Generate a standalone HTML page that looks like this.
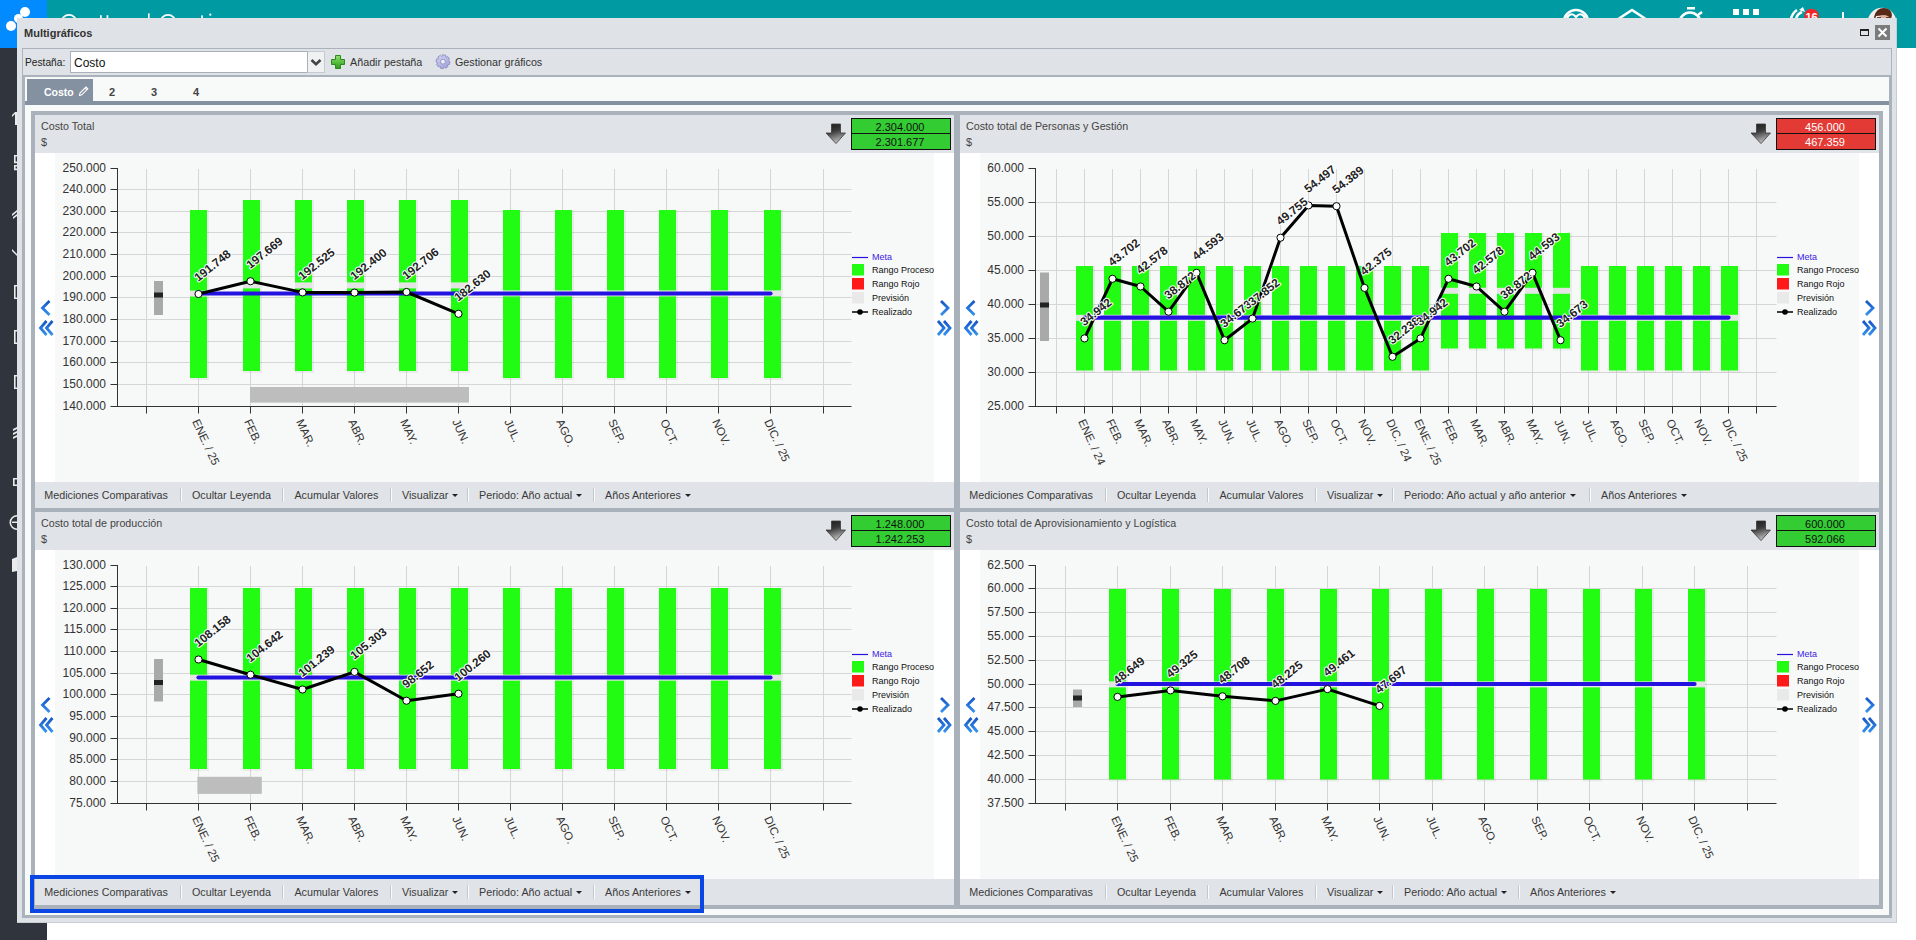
<!DOCTYPE html>
<html lang="es"><head><meta charset="utf-8"><title>Multigráficos</title>
<style>
*{margin:0;padding:0;box-sizing:border-box}
html,body{width:1916px;height:940px;overflow:hidden;background:#fff;font-family:"Liberation Sans", sans-serif;}
.a{position:absolute}
.t{position:absolute;white-space:nowrap;line-height:1}
svg text{font-family:"Liberation Sans", sans-serif}
</style></head><body>

<div class="a" style="left:0;top:0;width:1916px;height:48px;background:#009ba2"></div>
<div class="a" style="left:0;top:0;width:47px;height:48px;background:#028bff"></div>
<div class="a" style="left:0;top:48px;width:47px;height:892px;background:#30343c"></div>
<div class="a" style="left:6px;top:21px;width:10px;height:10px;border-radius:50%;background:#fff"></div>
<div class="a" style="left:14px;top:14px;width:9px;height:9px;border-radius:50%;background:#fff"></div>
<div class="a" style="left:20px;top:7px;width:10px;height:10px;border-radius:50%;background:#fff"></div>
<svg class="a" style="left:0;top:0" width="260" height="20"><g fill="none" stroke="#fff" stroke-width="1.7"><circle cx="69" cy="22.5" r="7.6"/><circle cx="168" cy="22.5" r="7.6"/></g><g fill="#fff"><rect x="100" y="15.2" width="1.7" height="4"/><rect x="106.6" y="15.2" width="1.7" height="4"/><rect x="148" y="13.4" width="1.6" height="6"/><rect x="201.2" y="15.4" width="1.7" height="4"/><circle cx="210.3" cy="14.7" r="1.15"/></g></svg>
<svg class="a" style="left:1540px;top:0" width="376" height="47" viewBox="0 0 376 47">
<circle cx="36" cy="22" r="12" fill="none" stroke="#ffffff" stroke-width="2.6"/>
<path d="M27 18 Q31 11 36 17 Q41 11 45 18" stroke="#ffffff" stroke-width="2.2" fill="none"/>
<path d="M77.5 19.5 L92 10 L106.5 19.5" stroke="#ffffff" stroke-width="2.6" fill="none" stroke-linejoin="miter"/>
<circle cx="150" cy="23" r="10.5" fill="none" stroke="#ffffff" stroke-width="2.6"/>
<rect x="147" y="7" width="8" height="2.5" fill="#ffffff"/>
<path d="M158 15 L162 12" stroke="#ffffff" stroke-width="2.6"/>
<rect x="193" y="9" width="6" height="6" fill="#ffffff"/><rect x="203" y="9" width="6" height="6" fill="#ffffff"/><rect x="213" y="9" width="6" height="6" fill="#ffffff"/>
<path d="M251 19 A14 14 0 0 1 257 10" stroke="#ffffff" stroke-width="2.6" fill="none"/>
<path d="M256 19 A10 10 0 0 1 262 12" stroke="#ffffff" stroke-width="2.6" fill="none"/>
<path d="M259 10 L263 7 L265 12Z" fill="#ffffff"/>
<circle cx="271.5" cy="16" r="7.3" fill="#f3262a"/>
<text x="271.5" y="21" font-size="11" font-weight="bold" fill="#fff" text-anchor="middle">16</text>
<rect x="302" y="12" width="2" height="8" fill="#ffffff"/>
<circle cx="342" cy="22" r="14.2" fill="#f2efed"/>
<path d="M334 17 Q336 8 344 8 Q351 8 352 15 L351 19 Q346 14 336 16 L335 20Z" fill="#5a2a18"/>
<ellipse cx="344" cy="21" rx="7" ry="6" fill="#e2b09a"/>
<path d="M337 17.5 h4 M346 17.5 h4" stroke="#6a3a2a" stroke-width="1.2"/>
</svg>
<svg class="a" style="left:0;top:112px" width="17" height="16"><path d="M15 0 h2 v13 h-2z M12 3 l3 -3 v2 l-3 3z" fill="#ffffff" opacity="0.9"/></svg>
<svg class="a" style="left:0;top:155px" width="17" height="16"><path d="M14 0 h3 v1.6 h-1.4 v5 h1.4 v1.6 h-3z M14 10 h3 v1.6 h-1.4 v2 h1.4 v1.6 h-3z" fill="#ffffff" opacity="0.9"/></svg>
<svg class="a" style="left:0;top:208px" width="17" height="16"><path d="M12 6 l5 -4 v2 l-5 4z M13 9 l4 -3 v2 l-4 3z" fill="#ffffff" opacity="0.9"/></svg>
<svg class="a" style="left:0;top:249px" width="17" height="16"><path d="M12 0 l5 5 v2 l-5 -5z" fill="#ffffff" opacity="0.9"/></svg>
<svg class="a" style="left:0;top:285px" width="17" height="16"><path d="M14 0 h3 v1.6 h-1.4 v10.8 h1.4 v1.6 h-3z" fill="#ffffff" opacity="0.9"/></svg>
<svg class="a" style="left:0;top:330px" width="17" height="16"><path d="M14 0 h3 v1.6 h-1.4 v10.8 h1.4 v1.6 h-3z" fill="#ffffff" opacity="0.9"/></svg>
<svg class="a" style="left:0;top:375px" width="17" height="16"><path d="M14 0 h3 v1.6 h-1.4 v10.8 h1.4 v1.6 h-3z" fill="#ffffff" opacity="0.9"/></svg>
<svg class="a" style="left:0;top:427px" width="17" height="16"><path d="M13 2 l4 -2 v2 l-4 2z M13 6 l4 -2 v2 l-4 2z M13 10 l4 -2 v2 l-4 2z" fill="#ffffff" opacity="0.9"/></svg>
<svg class="a" style="left:0;top:478px" width="17" height="16"><path d="M13 0 h4 v1.6 h-2.4 v4.8 h2.4 v1.6 h-4z" fill="#ffffff" opacity="0.9"/></svg>
<svg class="a" style="left:0;top:515px" width="17" height="16"><path d="M17 0 a7.5 7.5 0 0 0 0 15 v-1.6 a5.9 5.9 0 0 1 0 -11.8z M12 6.5 h5 v1.6 h-5z" fill="#ffffff" opacity="0.9"/></svg>
<svg class="a" style="left:0;top:557px" width="17" height="16"><path d="M12 2 l5 -2 v14 l-5 1z" fill="#ffffff" opacity="0.9"/></svg>
<div class="a" style="left:17px;top:18px;width:1880px;height:905px;background:#dfe2e6;border-right:1px solid #c8cdd3;border-bottom:1px solid #c8cdd3"></div>
<div class="t" style="left:24px;top:28px;font-size:11px;font-weight:bold;color:#333">Multigráficos</div>
<div class="a" style="left:1860px;top:29px;width:9px;height:7px;border:1.5px solid #222;border-top-width:2px"></div>
<div class="a" style="left:1875px;top:25px;width:15px;height:15px;background:#7b7b7b"></div>
<svg class="a" style="left:1875px;top:25px" width="15" height="15"><path d="M3.5 3.5 L11.5 11.5 M11.5 3.5 L3.5 11.5" stroke="#fff" stroke-width="2"/></svg>
<div class="a" style="left:22px;top:48px;width:1870px;height:870px;border:1px solid #aab2bb;border-left-width:1px;border-bottom-width:3px;border-top:1px solid #aab2bb;background:#f8f9f9"></div>
<div class="a" style="left:22px;top:75px;width:3px;height:843px;background:#aab2bb"></div>
<div class="a" style="left:1889px;top:77px;width:2px;height:838px;background:#aab2bb"></div>
<div class="a" style="left:23px;top:49px;width:1868px;height:28px;background:#dfe2e6;border-bottom:2px solid #aab2bb"></div>
<div class="t" style="left:25px;top:58px;font-size:10.2px;color:#222">Pestaña:</div>
<div class="a" style="left:70px;top:51px;width:238px;height:22px;background:#fff;border:1px solid #a9b0b8"></div>
<div class="t" style="left:74px;top:57px;font-size:12px;color:#111">Costo</div>
<div class="a" style="left:307px;top:51px;width:18px;height:22px;background:#f0f1f3;border:1px solid #c5cad0;border-left:1px solid #a9b0b8"></div>
<svg class="a" style="left:308px;top:55px" width="15" height="14"><path d="M3.5 5 L8 9.2 L12.5 5" stroke="#444" stroke-width="2.6" fill="none"/></svg>
<svg class="a" style="left:331px;top:55px" width="14" height="14" viewBox="0 0 14 14">
<defs><linearGradient id="gp" x1="0" y1="0" x2="0" y2="1"><stop offset="0" stop-color="#8be36a"/><stop offset="1" stop-color="#2c9a1a"/></linearGradient></defs>
<path d="M4.5 0.5 h5 v4 h4 v5 h-4 v4 h-5 v-4 h-4 v-5 h4z" fill="url(#gp)" stroke="#2a8a1c" stroke-width="1"/></svg>
<div class="t" style="left:350px;top:57px;font-size:10.75px;color:#333">Añadir pestaña</div>
<svg class="a" style="left:435px;top:54px" width="16" height="16" viewBox="0 0 16 16">
<defs><linearGradient id="gg" x1="0" y1="0" x2="1" y2="1"><stop offset="0" stop-color="#d8d8f4"/><stop offset="1" stop-color="#9a9ad6"/></linearGradient></defs>
<g transform="translate(8 7.7) rotate(11)"><path d="M5.05 -1.90 L6.83 -1.53 L6.83 1.53 L5.05 1.90 L4.92 2.23 L5.91 3.75 L3.75 5.91 L2.23 4.92 L1.90 5.05 L1.53 6.83 L-1.53 6.83 L-1.90 5.05 L-2.23 4.92 L-3.75 5.91 L-5.91 3.75 L-4.92 2.23 L-5.05 1.90 L-6.83 1.53 L-6.83 -1.53 L-5.05 -1.90 L-4.92 -2.23 L-5.91 -3.75 L-3.75 -5.91 L-2.23 -4.92 L-1.90 -5.05 L-1.53 -6.83 L1.53 -6.83 L1.90 -5.05 L2.23 -4.92 L3.75 -5.91 L5.91 -3.75 L4.92 -2.23Z" fill="url(#gg)" stroke="#8b8bc6" stroke-width="0.8" stroke-linejoin="round"/>
<circle r="2.4" fill="#eef0f8" stroke="#8b8bc6" stroke-width="0.8"/></g></svg>
<div class="t" style="left:455px;top:57px;font-size:10.75px;color:#333">Gestionar gráficos</div>
<div class="a" style="left:25px;top:77px;width:1864px;height:24px;background:#f8f9f9"></div>
<div class="a" style="left:25px;top:101px;width:1864px;height:4px;background:#8391a1"></div>
<div class="a" style="left:27px;top:79px;width:66px;height:23px;background:#8391a1"></div>
<div class="t" style="left:44px;top:87px;font-size:10.5px;font-weight:bold;color:#fff">Costo</div>
<svg class="a" style="left:78px;top:85px" width="11" height="12" viewBox="0 0 11 12"><path d="M1.5 10.5 L2 8 L8 2 L9.8 3.8 L3.8 9.8 Z M7 3 L8.8 4.8" stroke="#fff" stroke-width="1.1" fill="none"/></svg>
<div class="t" style="left:109px;top:87px;font-size:11px;font-weight:bold;color:#444">2</div>
<div class="t" style="left:151px;top:87px;font-size:11px;font-weight:bold;color:#444">3</div>
<div class="t" style="left:193px;top:87px;font-size:11px;font-weight:bold;color:#444">4</div>
<div class="a" style="left:31px;top:111px;width:1852px;height:798px;background:#a9b1ba"></div>
<div class="a" style="left:35px;top:115px;width:919px;height:38px;background:#e0e3e7"></div>
<div class="t" style="left:41px;top:121px;font-size:10.7px;color:#444">Costo Total</div>
<div class="t" style="left:41px;top:137px;font-size:10.9px;color:#444">$</div>
<svg class="a" style="left:825px;top:123px" width="22" height="22" viewBox="0 0 22 22">
<defs><linearGradient id="ar35115" x1="0" y1="0" x2="0.3" y2="1"><stop offset="0" stop-color="#1a1a1a"/><stop offset="0.45" stop-color="#3a3a3a"/><stop offset="1" stop-color="#b8b8b8"/></linearGradient></defs>
<path d="M6.5 1 h9 v9 h5 L11 20.6 L1 10 H6.5z" fill="url(#ar35115)" stroke="#3a3a3a" stroke-width="0.8" stroke-linejoin="round"/></svg>
<div class="a" style="left:851px;top:118px;width:100px;height:32px;background:#33cc33;border:1.5px solid #111"></div>
<div class="a" style="left:851px;top:132.6px;width:100px;height:1.3px;background:#111"></div>
<div class="t" style="left:851px;top:122px;width:98px;text-align:center;font-size:11px;color:#111">2.304.000</div>
<div class="t" style="left:851px;top:137px;width:98px;text-align:center;font-size:11px;color:#111">2.301.677</div>
<div class="a" style="left:35px;top:153px;width:919px;height:329px;background:#fff"></div>
<div class="a" style="left:55px;top:153px;width:879px;height:329px;background:#f7f8f8"></div>
<svg class="a" style="left:0;top:0" width="1916" height="940" viewBox="0 0 1916 940"><path d="M110.5 406.5 H117.5" stroke="#333333" stroke-width="1"/><text x="106.0" y="409.8" font-size="12" fill="#333" text-anchor="end">140.000</text><path d="M117.5 384.5 H851.5" stroke="#d6d6d6" stroke-width="1"/><path d="M110.5 384.5 H117.5" stroke="#333333" stroke-width="1"/><text x="106.0" y="387.8" font-size="12" fill="#333" text-anchor="end">150.000</text><path d="M117.5 362.5 H851.5" stroke="#d6d6d6" stroke-width="1"/><path d="M110.5 362.5 H117.5" stroke="#333333" stroke-width="1"/><text x="106.0" y="365.8" font-size="12" fill="#333" text-anchor="end">160.000</text><path d="M117.5 341.5 H851.5" stroke="#d6d6d6" stroke-width="1"/><path d="M110.5 341.5 H117.5" stroke="#333333" stroke-width="1"/><text x="106.0" y="344.8" font-size="12" fill="#333" text-anchor="end">170.000</text><path d="M117.5 319.5 H851.5" stroke="#d6d6d6" stroke-width="1"/><path d="M110.5 319.5 H117.5" stroke="#333333" stroke-width="1"/><text x="106.0" y="322.8" font-size="12" fill="#333" text-anchor="end">180.000</text><path d="M117.5 297.5 H851.5" stroke="#d6d6d6" stroke-width="1"/><path d="M110.5 297.5 H117.5" stroke="#333333" stroke-width="1"/><text x="106.0" y="300.8" font-size="12" fill="#333" text-anchor="end">190.000</text><path d="M117.5 276.5 H851.5" stroke="#d6d6d6" stroke-width="1"/><path d="M110.5 276.5 H117.5" stroke="#333333" stroke-width="1"/><text x="106.0" y="279.8" font-size="12" fill="#333" text-anchor="end">200.000</text><path d="M117.5 254.5 H851.5" stroke="#d6d6d6" stroke-width="1"/><path d="M110.5 254.5 H117.5" stroke="#333333" stroke-width="1"/><text x="106.0" y="257.8" font-size="12" fill="#333" text-anchor="end">210.000</text><path d="M117.5 232.5 H851.5" stroke="#d6d6d6" stroke-width="1"/><path d="M110.5 232.5 H117.5" stroke="#333333" stroke-width="1"/><text x="106.0" y="235.8" font-size="12" fill="#333" text-anchor="end">220.000</text><path d="M117.5 211.5 H851.5" stroke="#d6d6d6" stroke-width="1"/><path d="M110.5 211.5 H117.5" stroke="#333333" stroke-width="1"/><text x="106.0" y="214.8" font-size="12" fill="#333" text-anchor="end">230.000</text><path d="M117.5 189.5 H851.5" stroke="#d6d6d6" stroke-width="1"/><path d="M110.5 189.5 H117.5" stroke="#333333" stroke-width="1"/><text x="106.0" y="192.8" font-size="12" fill="#333" text-anchor="end">240.000</text><path d="M110.5 168.5 H117.5" stroke="#333333" stroke-width="1"/><text x="106.0" y="171.8" font-size="12" fill="#333" text-anchor="end">250.000</text><path d="M146.5 169 V406.5" stroke="#d6d6d6" stroke-width="1"/><path d="M146.5 406.5 V413.5" stroke="#333333" stroke-width="1"/><path d="M198.5 169 V406.5" stroke="#d6d6d6" stroke-width="1"/><path d="M198.5 406.5 V413.5" stroke="#333333" stroke-width="1"/><path d="M250.5 169 V406.5" stroke="#d6d6d6" stroke-width="1"/><path d="M250.5 406.5 V413.5" stroke="#333333" stroke-width="1"/><path d="M302.5 169 V406.5" stroke="#d6d6d6" stroke-width="1"/><path d="M302.5 406.5 V413.5" stroke="#333333" stroke-width="1"/><path d="M354.5 169 V406.5" stroke="#d6d6d6" stroke-width="1"/><path d="M354.5 406.5 V413.5" stroke="#333333" stroke-width="1"/><path d="M406.5 169 V406.5" stroke="#d6d6d6" stroke-width="1"/><path d="M406.5 406.5 V413.5" stroke="#333333" stroke-width="1"/><path d="M458.5 169 V406.5" stroke="#d6d6d6" stroke-width="1"/><path d="M458.5 406.5 V413.5" stroke="#333333" stroke-width="1"/><path d="M510.5 169 V406.5" stroke="#d6d6d6" stroke-width="1"/><path d="M510.5 406.5 V413.5" stroke="#333333" stroke-width="1"/><path d="M562.5 169 V406.5" stroke="#d6d6d6" stroke-width="1"/><path d="M562.5 406.5 V413.5" stroke="#333333" stroke-width="1"/><path d="M614.5 169 V406.5" stroke="#d6d6d6" stroke-width="1"/><path d="M614.5 406.5 V413.5" stroke="#333333" stroke-width="1"/><path d="M666.5 169 V406.5" stroke="#d6d6d6" stroke-width="1"/><path d="M666.5 406.5 V413.5" stroke="#333333" stroke-width="1"/><path d="M718.5 169 V406.5" stroke="#d6d6d6" stroke-width="1"/><path d="M718.5 406.5 V413.5" stroke="#333333" stroke-width="1"/><path d="M770.5 169 V406.5" stroke="#d6d6d6" stroke-width="1"/><path d="M770.5 406.5 V413.5" stroke="#333333" stroke-width="1"/><path d="M823.5 169 V406.5" stroke="#d6d6d6" stroke-width="1"/><path d="M823.5 406.5 V413.5" stroke="#333333" stroke-width="1"/><path d="M117.5 168 V406.5" stroke="#333333" stroke-width="1"/><path d="M117.0 406.5 H851.5" stroke="#333333" stroke-width="1"/><rect x="250" y="387" width="219" height="15.600000000000023" fill="#bdbdbd"/><rect x="154" y="281" width="9" height="34" fill="#a9a9a9"/><rect x="154" y="292.5" width="9" height="5" fill="#222"/><rect x="191" y="211.0" width="17" height="168.0" fill="none" stroke="#000" stroke-opacity="0.05" stroke-width="2"/><rect x="190" y="210.0" width="17" height="168.0" fill="#22fc12"/><rect x="244" y="201.0" width="17" height="171.0" fill="none" stroke="#000" stroke-opacity="0.05" stroke-width="2"/><rect x="243" y="200.0" width="17" height="171.0" fill="#22fc12"/><rect x="296" y="201.0" width="17" height="171.0" fill="none" stroke="#000" stroke-opacity="0.05" stroke-width="2"/><rect x="295" y="200.0" width="17" height="171.0" fill="#22fc12"/><rect x="348" y="201.0" width="17" height="171.0" fill="none" stroke="#000" stroke-opacity="0.05" stroke-width="2"/><rect x="347" y="200.0" width="17" height="171.0" fill="#22fc12"/><rect x="400" y="201.0" width="17" height="171.0" fill="none" stroke="#000" stroke-opacity="0.05" stroke-width="2"/><rect x="399" y="200.0" width="17" height="171.0" fill="#22fc12"/><rect x="452" y="201.0" width="17" height="171.0" fill="none" stroke="#000" stroke-opacity="0.05" stroke-width="2"/><rect x="451" y="200.0" width="17" height="171.0" fill="#22fc12"/><rect x="504" y="211.0" width="17" height="168.0" fill="none" stroke="#000" stroke-opacity="0.05" stroke-width="2"/><rect x="503" y="210.0" width="17" height="168.0" fill="#22fc12"/><rect x="556" y="211.0" width="17" height="168.0" fill="none" stroke="#000" stroke-opacity="0.05" stroke-width="2"/><rect x="555" y="210.0" width="17" height="168.0" fill="#22fc12"/><rect x="608" y="211.0" width="17" height="168.0" fill="none" stroke="#000" stroke-opacity="0.05" stroke-width="2"/><rect x="607" y="210.0" width="17" height="168.0" fill="#22fc12"/><rect x="660" y="211.0" width="17" height="168.0" fill="none" stroke="#000" stroke-opacity="0.05" stroke-width="2"/><rect x="659" y="210.0" width="17" height="168.0" fill="#22fc12"/><rect x="712" y="211.0" width="17" height="168.0" fill="none" stroke="#000" stroke-opacity="0.05" stroke-width="2"/><rect x="711" y="210.0" width="17" height="168.0" fill="#22fc12"/><rect x="765" y="211.0" width="17" height="168.0" fill="none" stroke="#000" stroke-opacity="0.05" stroke-width="2"/><rect x="764" y="210.0" width="17" height="168.0" fill="#22fc12"/><rect x="190" y="290.6" width="17" height="6" fill="#e4e4e4"/><rect x="243" y="282.4" width="17" height="6" fill="#e4e4e4"/><rect x="295" y="282.4" width="17" height="6" fill="#e4e4e4"/><rect x="347" y="282.4" width="17" height="6" fill="#e4e4e4"/><rect x="399" y="282.4" width="17" height="6" fill="#e4e4e4"/><rect x="451" y="282.4" width="17" height="6" fill="#e4e4e4"/><rect x="503" y="290.4" width="17" height="6" fill="#e4e4e4"/><rect x="555" y="290.4" width="17" height="6" fill="#e4e4e4"/><rect x="607" y="290.4" width="17" height="6" fill="#e4e4e4"/><rect x="659" y="290.4" width="17" height="6" fill="#e4e4e4"/><rect x="711" y="290.4" width="17" height="6" fill="#e4e4e4"/><rect x="764" y="290.4" width="17" height="6" fill="#e4e4e4"/><path d="M198.5 293.5 H770.5" stroke="#2412e0" stroke-width="4.2" stroke-linecap="round"/><path d="M198.5 294.0 L250.5 281.2 L302.5 292.4 L354.5 292.6 L406.5 292.0 L458.5 313.8" stroke="#000" stroke-width="3" fill="none" stroke-linejoin="round"/><circle cx="198.5" cy="294.0" r="3.6" fill="#fff" stroke="#000" stroke-width="1"/><circle cx="250.5" cy="281.2" r="3.6" fill="#fff" stroke="#000" stroke-width="1"/><circle cx="302.5" cy="292.4" r="3.6" fill="#fff" stroke="#000" stroke-width="1"/><circle cx="354.5" cy="292.6" r="3.6" fill="#fff" stroke="#000" stroke-width="1"/><circle cx="406.5" cy="292.0" r="3.6" fill="#fff" stroke="#000" stroke-width="1"/><circle cx="458.5" cy="313.8" r="3.6" fill="#fff" stroke="#000" stroke-width="1"/><text transform="translate(198.3 282.0) rotate(-38.5)" font-size="11.8" font-weight="bold" fill="#222" stroke="#fff" stroke-width="2" paint-order="stroke" stroke-linejoin="round">191.748</text><text transform="translate(250.3 269.2) rotate(-38.5)" font-size="11.8" font-weight="bold" fill="#222" stroke="#fff" stroke-width="2" paint-order="stroke" stroke-linejoin="round">197.669</text><text transform="translate(302.3 280.4) rotate(-38.5)" font-size="11.8" font-weight="bold" fill="#222" stroke="#fff" stroke-width="2" paint-order="stroke" stroke-linejoin="round">192.525</text><text transform="translate(354.3 280.6) rotate(-38.5)" font-size="11.8" font-weight="bold" fill="#222" stroke="#fff" stroke-width="2" paint-order="stroke" stroke-linejoin="round">192.400</text><text transform="translate(406.3 280.0) rotate(-38.5)" font-size="11.8" font-weight="bold" fill="#222" stroke="#fff" stroke-width="2" paint-order="stroke" stroke-linejoin="round">192.706</text><text transform="translate(458.3 301.8) rotate(-38.5)" font-size="11.8" font-weight="bold" fill="#222" stroke="#fff" stroke-width="2" paint-order="stroke" stroke-linejoin="round">182.630</text><text transform="translate(191.9 421.5) rotate(65)" font-size="11.5" fill="#333">ENE. / 25</text><text transform="translate(243.9 421.5) rotate(65)" font-size="11.5" fill="#333">FEB.</text><text transform="translate(295.9 421.5) rotate(65)" font-size="11.5" fill="#333">MAR.</text><text transform="translate(347.9 421.5) rotate(65)" font-size="11.5" fill="#333">ABR.</text><text transform="translate(399.9 421.5) rotate(65)" font-size="11.5" fill="#333">MAY.</text><text transform="translate(451.9 421.5) rotate(65)" font-size="11.5" fill="#333">JUN.</text><text transform="translate(503.9 421.5) rotate(65)" font-size="11.5" fill="#333">JUL.</text><text transform="translate(555.9 421.5) rotate(65)" font-size="11.5" fill="#333">AGO.</text><text transform="translate(607.9 421.5) rotate(65)" font-size="11.5" fill="#333">SEP.</text><text transform="translate(659.9 421.5) rotate(65)" font-size="11.5" fill="#333">OCT.</text><text transform="translate(711.9 421.5) rotate(65)" font-size="11.5" fill="#333">NOV.</text><text transform="translate(763.9 421.5) rotate(65)" font-size="11.5" fill="#333">DIC. / 25</text><path d="M852 257.5 H868" stroke="#2412e0" stroke-width="1.2"/><text x="872" y="260.0001" font-size="9" fill="#3b22e6">Meta</text><rect x="852" y="264.0001" width="12" height="11.5" fill="#22fc12"/><text x="872" y="272.5001" font-size="9" fill="#111">Rango Proceso</text><rect x="852" y="278.0001" width="12" height="11.5" fill="#ff1a1a"/><text x="872" y="286.5001" font-size="9" fill="#111">Rango Rojo</text><rect x="852" y="292.0001" width="12" height="11.5" fill="#e9e9e9"/><text x="872" y="300.5001" font-size="9" fill="#111">Previsión</text><path d="M852 312.0001 H868" stroke="#000" stroke-width="1.5"/><circle cx="860" cy="312.0001" r="2.8" fill="#000"/><text x="872" y="315.0001" font-size="9" fill="#111">Realizado</text><defs><linearGradient id="ag35153" x1="0" y1="0" x2="0" y2="1"><stop offset="0" stop-color="#1656c8"/><stop offset="1" stop-color="#3592ec"/></linearGradient></defs><g transform=""><path d="M49.5 301 L42.5 308 L49.5 315" stroke="url(#ag35153)" stroke-width="2.8" fill="none"/><path d="M46.5 321 L40.5 328 L46.5 335 M52.5 321 L46.5 328 L52.5 335" stroke="url(#ag35153)" stroke-width="2.8" fill="none"/></g><g transform="translate(951 0) scale(-1 1) translate(-938 0)"><path d="M948 301 L941 308 L948 315" stroke="url(#ag35153)" stroke-width="2.8" fill="none"/><path d="M945 321 L939 328 L945 335 M951 321 L945 328 L951 335" stroke="url(#ag35153)" stroke-width="2.8" fill="none"/></g></svg>
<div class="a" style="left:35px;top:482px;width:919px;height:26px;background:#e0e3e7"></div>
<div class="t" style="left:44.3px;top:490px;font-size:10.75px;color:#3a3a3a">Mediciones Comparativas</div>
<div class="t" style="left:192.0px;top:490px;font-size:10.75px;color:#3a3a3a">Ocultar Leyenda</div>
<div class="t" style="left:294.4px;top:490px;font-size:10.75px;color:#3a3a3a">Acumular Valores</div>
<div class="t" style="left:402.0px;top:490px;font-size:10.75px;color:#3a3a3a">Visualizar<span style="display:inline-block;width:0;height:0;border-left:3px solid transparent;border-right:3px solid transparent;border-top:3.5px solid #222;margin-left:4px;vertical-align:2px"></span></div>
<div class="t" style="left:479.0px;top:490px;font-size:10.75px;color:#3a3a3a">Periodo: Año actual<span style="display:inline-block;width:0;height:0;border-left:3px solid transparent;border-right:3px solid transparent;border-top:3.5px solid #222;margin-left:4px;vertical-align:2px"></span></div>
<div class="t" style="left:605.0px;top:490px;font-size:10.75px;color:#3a3a3a">Años Anteriores<span style="display:inline-block;width:0;height:0;border-left:3px solid transparent;border-right:3px solid transparent;border-top:3.5px solid #222;margin-left:4px;vertical-align:2px"></span></div>
<div class="a" style="left:179.9px;top:488px;width:1px;height:14px;background:#c3c8ce;box-shadow:1px 0 0 #fafbfb"></div>
<div class="a" style="left:282.0px;top:488px;width:1px;height:14px;background:#c3c8ce;box-shadow:1px 0 0 #fafbfb"></div>
<div class="a" style="left:390.0px;top:488px;width:1px;height:14px;background:#c3c8ce;box-shadow:1px 0 0 #fafbfb"></div>
<div class="a" style="left:467.0px;top:488px;width:1px;height:14px;background:#c3c8ce;box-shadow:1px 0 0 #fafbfb"></div>
<div class="a" style="left:592.8px;top:488px;width:1px;height:14px;background:#c3c8ce;box-shadow:1px 0 0 #fafbfb"></div>
<div class="a" style="left:960px;top:115px;width:919px;height:38px;background:#e0e3e7"></div>
<div class="t" style="left:966px;top:121px;font-size:10.7px;color:#444">Costo total de Personas y Gestión</div>
<div class="t" style="left:966px;top:137px;font-size:10.9px;color:#444">$</div>
<svg class="a" style="left:1750px;top:123px" width="22" height="22" viewBox="0 0 22 22">
<defs><linearGradient id="ar960115" x1="0" y1="0" x2="0.3" y2="1"><stop offset="0" stop-color="#1a1a1a"/><stop offset="0.45" stop-color="#3a3a3a"/><stop offset="1" stop-color="#b8b8b8"/></linearGradient></defs>
<path d="M6.5 1 h9 v9 h5 L11 20.6 L1 10 H6.5z" fill="url(#ar960115)" stroke="#3a3a3a" stroke-width="0.8" stroke-linejoin="round"/></svg>
<div class="a" style="left:1776px;top:118px;width:100px;height:32px;background:#e43a35;border:1.5px solid #111"></div>
<div class="a" style="left:1776px;top:132.6px;width:100px;height:1.3px;background:#111"></div>
<div class="t" style="left:1776px;top:122px;width:98px;text-align:center;font-size:11px;color:#fff">456.000</div>
<div class="t" style="left:1776px;top:137px;width:98px;text-align:center;font-size:11px;color:#fff">467.359</div>
<div class="a" style="left:960px;top:153px;width:919px;height:329px;background:#fff"></div>
<div class="a" style="left:980px;top:153px;width:879px;height:329px;background:#f7f8f8"></div>
<svg class="a" style="left:0;top:0" width="1916" height="940" viewBox="0 0 1916 940"><path d="M1028.5 406.5 H1035.5" stroke="#333333" stroke-width="1"/><text x="1024.0" y="409.8" font-size="12" fill="#333" text-anchor="end">25.000</text><path d="M1035.5 372.5 H1776.5" stroke="#d6d6d6" stroke-width="1"/><path d="M1028.5 372.5 H1035.5" stroke="#333333" stroke-width="1"/><text x="1024.0" y="375.8" font-size="12" fill="#333" text-anchor="end">30.000</text><path d="M1035.5 338.5 H1776.5" stroke="#d6d6d6" stroke-width="1"/><path d="M1028.5 338.5 H1035.5" stroke="#333333" stroke-width="1"/><text x="1024.0" y="341.8" font-size="12" fill="#333" text-anchor="end">35.000</text><path d="M1035.5 304.5 H1776.5" stroke="#d6d6d6" stroke-width="1"/><path d="M1028.5 304.5 H1035.5" stroke="#333333" stroke-width="1"/><text x="1024.0" y="307.8" font-size="12" fill="#333" text-anchor="end">40.000</text><path d="M1035.5 270.5 H1776.5" stroke="#d6d6d6" stroke-width="1"/><path d="M1028.5 270.5 H1035.5" stroke="#333333" stroke-width="1"/><text x="1024.0" y="273.8" font-size="12" fill="#333" text-anchor="end">45.000</text><path d="M1035.5 236.5 H1776.5" stroke="#d6d6d6" stroke-width="1"/><path d="M1028.5 236.5 H1035.5" stroke="#333333" stroke-width="1"/><text x="1024.0" y="239.8" font-size="12" fill="#333" text-anchor="end">50.000</text><path d="M1035.5 202.5 H1776.5" stroke="#d6d6d6" stroke-width="1"/><path d="M1028.5 202.5 H1035.5" stroke="#333333" stroke-width="1"/><text x="1024.0" y="205.8" font-size="12" fill="#333" text-anchor="end">55.000</text><path d="M1028.5 168.5 H1035.5" stroke="#333333" stroke-width="1"/><text x="1024.0" y="171.8" font-size="12" fill="#333" text-anchor="end">60.000</text><path d="M1056.5 169 V406.5" stroke="#d6d6d6" stroke-width="1"/><path d="M1056.5 406.5 V413.5" stroke="#333333" stroke-width="1"/><path d="M1084.5 169 V406.5" stroke="#d6d6d6" stroke-width="1"/><path d="M1084.5 406.5 V413.5" stroke="#333333" stroke-width="1"/><path d="M1112.5 169 V406.5" stroke="#d6d6d6" stroke-width="1"/><path d="M1112.5 406.5 V413.5" stroke="#333333" stroke-width="1"/><path d="M1140.5 169 V406.5" stroke="#d6d6d6" stroke-width="1"/><path d="M1140.5 406.5 V413.5" stroke="#333333" stroke-width="1"/><path d="M1168.5 169 V406.5" stroke="#d6d6d6" stroke-width="1"/><path d="M1168.5 406.5 V413.5" stroke="#333333" stroke-width="1"/><path d="M1196.5 169 V406.5" stroke="#d6d6d6" stroke-width="1"/><path d="M1196.5 406.5 V413.5" stroke="#333333" stroke-width="1"/><path d="M1224.5 169 V406.5" stroke="#d6d6d6" stroke-width="1"/><path d="M1224.5 406.5 V413.5" stroke="#333333" stroke-width="1"/><path d="M1252.5 169 V406.5" stroke="#d6d6d6" stroke-width="1"/><path d="M1252.5 406.5 V413.5" stroke="#333333" stroke-width="1"/><path d="M1280.5 169 V406.5" stroke="#d6d6d6" stroke-width="1"/><path d="M1280.5 406.5 V413.5" stroke="#333333" stroke-width="1"/><path d="M1308.5 169 V406.5" stroke="#d6d6d6" stroke-width="1"/><path d="M1308.5 406.5 V413.5" stroke="#333333" stroke-width="1"/><path d="M1336.5 169 V406.5" stroke="#d6d6d6" stroke-width="1"/><path d="M1336.5 406.5 V413.5" stroke="#333333" stroke-width="1"/><path d="M1364.5 169 V406.5" stroke="#d6d6d6" stroke-width="1"/><path d="M1364.5 406.5 V413.5" stroke="#333333" stroke-width="1"/><path d="M1392.5 169 V406.5" stroke="#d6d6d6" stroke-width="1"/><path d="M1392.5 406.5 V413.5" stroke="#333333" stroke-width="1"/><path d="M1420.5 169 V406.5" stroke="#d6d6d6" stroke-width="1"/><path d="M1420.5 406.5 V413.5" stroke="#333333" stroke-width="1"/><path d="M1448.5 169 V406.5" stroke="#d6d6d6" stroke-width="1"/><path d="M1448.5 406.5 V413.5" stroke="#333333" stroke-width="1"/><path d="M1476.5 169 V406.5" stroke="#d6d6d6" stroke-width="1"/><path d="M1476.5 406.5 V413.5" stroke="#333333" stroke-width="1"/><path d="M1504.5 169 V406.5" stroke="#d6d6d6" stroke-width="1"/><path d="M1504.5 406.5 V413.5" stroke="#333333" stroke-width="1"/><path d="M1532.5 169 V406.5" stroke="#d6d6d6" stroke-width="1"/><path d="M1532.5 406.5 V413.5" stroke="#333333" stroke-width="1"/><path d="M1560.5 169 V406.5" stroke="#d6d6d6" stroke-width="1"/><path d="M1560.5 406.5 V413.5" stroke="#333333" stroke-width="1"/><path d="M1588.5 169 V406.5" stroke="#d6d6d6" stroke-width="1"/><path d="M1588.5 406.5 V413.5" stroke="#333333" stroke-width="1"/><path d="M1616.5 169 V406.5" stroke="#d6d6d6" stroke-width="1"/><path d="M1616.5 406.5 V413.5" stroke="#333333" stroke-width="1"/><path d="M1644.5 169 V406.5" stroke="#d6d6d6" stroke-width="1"/><path d="M1644.5 406.5 V413.5" stroke="#333333" stroke-width="1"/><path d="M1672.5 169 V406.5" stroke="#d6d6d6" stroke-width="1"/><path d="M1672.5 406.5 V413.5" stroke="#333333" stroke-width="1"/><path d="M1700.5 169 V406.5" stroke="#d6d6d6" stroke-width="1"/><path d="M1700.5 406.5 V413.5" stroke="#333333" stroke-width="1"/><path d="M1728.5 169 V406.5" stroke="#d6d6d6" stroke-width="1"/><path d="M1728.5 406.5 V413.5" stroke="#333333" stroke-width="1"/><path d="M1756.5 169 V406.5" stroke="#d6d6d6" stroke-width="1"/><path d="M1756.5 406.5 V413.5" stroke="#333333" stroke-width="1"/><path d="M1035.5 168 V406.5" stroke="#333333" stroke-width="1"/><path d="M1035.0 406.5 H1776.5" stroke="#333333" stroke-width="1"/><rect x="1040" y="272.5" width="9" height="68.5" fill="#a9a9a9"/><rect x="1040" y="302.5" width="9" height="5" fill="#222"/><rect x="1077" y="267.0" width="17" height="104.5" fill="none" stroke="#000" stroke-opacity="0.05" stroke-width="2"/><rect x="1076" y="266.0" width="17" height="104.5" fill="#22fc12"/><rect x="1105" y="267.0" width="17" height="104.5" fill="none" stroke="#000" stroke-opacity="0.05" stroke-width="2"/><rect x="1104" y="266.0" width="17" height="104.5" fill="#22fc12"/><rect x="1133" y="267.0" width="17" height="104.5" fill="none" stroke="#000" stroke-opacity="0.05" stroke-width="2"/><rect x="1132" y="266.0" width="17" height="104.5" fill="#22fc12"/><rect x="1161" y="267.0" width="17" height="104.5" fill="none" stroke="#000" stroke-opacity="0.05" stroke-width="2"/><rect x="1160" y="266.0" width="17" height="104.5" fill="#22fc12"/><rect x="1189" y="267.0" width="17" height="104.5" fill="none" stroke="#000" stroke-opacity="0.05" stroke-width="2"/><rect x="1188" y="266.0" width="17" height="104.5" fill="#22fc12"/><rect x="1217" y="267.0" width="17" height="104.5" fill="none" stroke="#000" stroke-opacity="0.05" stroke-width="2"/><rect x="1216" y="266.0" width="17" height="104.5" fill="#22fc12"/><rect x="1245" y="267.0" width="17" height="104.5" fill="none" stroke="#000" stroke-opacity="0.05" stroke-width="2"/><rect x="1244" y="266.0" width="17" height="104.5" fill="#22fc12"/><rect x="1273" y="267.0" width="17" height="104.5" fill="none" stroke="#000" stroke-opacity="0.05" stroke-width="2"/><rect x="1272" y="266.0" width="17" height="104.5" fill="#22fc12"/><rect x="1301" y="267.0" width="17" height="104.5" fill="none" stroke="#000" stroke-opacity="0.05" stroke-width="2"/><rect x="1300" y="266.0" width="17" height="104.5" fill="#22fc12"/><rect x="1329" y="267.0" width="17" height="104.5" fill="none" stroke="#000" stroke-opacity="0.05" stroke-width="2"/><rect x="1328" y="266.0" width="17" height="104.5" fill="#22fc12"/><rect x="1357" y="267.0" width="17" height="104.5" fill="none" stroke="#000" stroke-opacity="0.05" stroke-width="2"/><rect x="1356" y="266.0" width="17" height="104.5" fill="#22fc12"/><rect x="1385" y="267.0" width="17" height="104.5" fill="none" stroke="#000" stroke-opacity="0.05" stroke-width="2"/><rect x="1384" y="266.0" width="17" height="104.5" fill="#22fc12"/><rect x="1413" y="267.0" width="17" height="104.5" fill="none" stroke="#000" stroke-opacity="0.05" stroke-width="2"/><rect x="1412" y="266.0" width="17" height="104.5" fill="#22fc12"/><rect x="1442" y="234.0" width="17" height="115.5" fill="none" stroke="#000" stroke-opacity="0.05" stroke-width="2"/><rect x="1441" y="233.0" width="17" height="115.5" fill="#22fc12"/><rect x="1470" y="234.0" width="17" height="115.5" fill="none" stroke="#000" stroke-opacity="0.05" stroke-width="2"/><rect x="1469" y="233.0" width="17" height="115.5" fill="#22fc12"/><rect x="1498" y="234.0" width="17" height="115.5" fill="none" stroke="#000" stroke-opacity="0.05" stroke-width="2"/><rect x="1497" y="233.0" width="17" height="115.5" fill="#22fc12"/><rect x="1526" y="234.0" width="17" height="115.5" fill="none" stroke="#000" stroke-opacity="0.05" stroke-width="2"/><rect x="1525" y="233.0" width="17" height="115.5" fill="#22fc12"/><rect x="1554" y="234.0" width="17" height="115.5" fill="none" stroke="#000" stroke-opacity="0.05" stroke-width="2"/><rect x="1553" y="233.0" width="17" height="115.5" fill="#22fc12"/><rect x="1582" y="267.0" width="17" height="104.5" fill="none" stroke="#000" stroke-opacity="0.05" stroke-width="2"/><rect x="1581" y="266.0" width="17" height="104.5" fill="#22fc12"/><rect x="1610" y="267.0" width="17" height="104.5" fill="none" stroke="#000" stroke-opacity="0.05" stroke-width="2"/><rect x="1609" y="266.0" width="17" height="104.5" fill="#22fc12"/><rect x="1638" y="267.0" width="17" height="104.5" fill="none" stroke="#000" stroke-opacity="0.05" stroke-width="2"/><rect x="1637" y="266.0" width="17" height="104.5" fill="#22fc12"/><rect x="1666" y="267.0" width="17" height="104.5" fill="none" stroke="#000" stroke-opacity="0.05" stroke-width="2"/><rect x="1665" y="266.0" width="17" height="104.5" fill="#22fc12"/><rect x="1694" y="267.0" width="17" height="104.5" fill="none" stroke="#000" stroke-opacity="0.05" stroke-width="2"/><rect x="1693" y="266.0" width="17" height="104.5" fill="#22fc12"/><rect x="1722" y="267.0" width="17" height="104.5" fill="none" stroke="#000" stroke-opacity="0.05" stroke-width="2"/><rect x="1721" y="266.0" width="17" height="104.5" fill="#22fc12"/><rect x="1076" y="314.8" width="17" height="6" fill="#e4e4e4"/><rect x="1104" y="314.8" width="17" height="6" fill="#e4e4e4"/><rect x="1132" y="314.8" width="17" height="6" fill="#e4e4e4"/><rect x="1160" y="314.8" width="17" height="6" fill="#e4e4e4"/><rect x="1188" y="314.8" width="17" height="6" fill="#e4e4e4"/><rect x="1216" y="314.8" width="17" height="6" fill="#e4e4e4"/><rect x="1244" y="314.8" width="17" height="6" fill="#e4e4e4"/><rect x="1272" y="314.8" width="17" height="6" fill="#e4e4e4"/><rect x="1300" y="314.8" width="17" height="6" fill="#e4e4e4"/><rect x="1328" y="314.8" width="17" height="6" fill="#e4e4e4"/><rect x="1356" y="314.8" width="17" height="6" fill="#e4e4e4"/><rect x="1384" y="314.8" width="17" height="6" fill="#e4e4e4"/><rect x="1412" y="314.8" width="17" height="6" fill="#e4e4e4"/><rect x="1441" y="287.8" width="17" height="6" fill="#e4e4e4"/><rect x="1469" y="287.8" width="17" height="6" fill="#e4e4e4"/><rect x="1497" y="287.8" width="17" height="6" fill="#e4e4e4"/><rect x="1525" y="287.8" width="17" height="6" fill="#e4e4e4"/><rect x="1553" y="287.8" width="17" height="6" fill="#e4e4e4"/><rect x="1581" y="314.8" width="17" height="6" fill="#e4e4e4"/><rect x="1609" y="314.8" width="17" height="6" fill="#e4e4e4"/><rect x="1637" y="314.8" width="17" height="6" fill="#e4e4e4"/><rect x="1665" y="314.8" width="17" height="6" fill="#e4e4e4"/><rect x="1693" y="314.8" width="17" height="6" fill="#e4e4e4"/><rect x="1721" y="314.8" width="17" height="6" fill="#e4e4e4"/><path d="M1084.5 317.6 H1728.5" stroke="#2412e0" stroke-width="4.2" stroke-linecap="round"/><path d="M1084.5 338.4 L1112.5 278.8 L1140.5 286.5 L1168.5 311.7 L1196.5 272.8 L1224.5 340.2 L1252.5 318.6 L1280.5 237.7 L1308.5 205.4 L1336.5 206.2 L1364.5 287.9 L1392.5 356.8 L1420.5 338.4 L1448.5 278.8 L1476.5 286.5 L1504.5 311.7 L1532.5 272.8 L1560.5 340.2" stroke="#000" stroke-width="3" fill="none" stroke-linejoin="round"/><circle cx="1084.5" cy="338.4" r="3.6" fill="#fff" stroke="#000" stroke-width="1"/><circle cx="1112.5" cy="278.8" r="3.6" fill="#fff" stroke="#000" stroke-width="1"/><circle cx="1140.5" cy="286.5" r="3.6" fill="#fff" stroke="#000" stroke-width="1"/><circle cx="1168.5" cy="311.7" r="3.6" fill="#fff" stroke="#000" stroke-width="1"/><circle cx="1196.5" cy="272.8" r="3.6" fill="#fff" stroke="#000" stroke-width="1"/><circle cx="1224.5" cy="340.2" r="3.6" fill="#fff" stroke="#000" stroke-width="1"/><circle cx="1252.5" cy="318.6" r="3.6" fill="#fff" stroke="#000" stroke-width="1"/><circle cx="1280.5" cy="237.7" r="3.6" fill="#fff" stroke="#000" stroke-width="1"/><circle cx="1308.5" cy="205.4" r="3.6" fill="#fff" stroke="#000" stroke-width="1"/><circle cx="1336.5" cy="206.2" r="3.6" fill="#fff" stroke="#000" stroke-width="1"/><circle cx="1364.5" cy="287.9" r="3.6" fill="#fff" stroke="#000" stroke-width="1"/><circle cx="1392.5" cy="356.8" r="3.6" fill="#fff" stroke="#000" stroke-width="1"/><circle cx="1420.5" cy="338.4" r="3.6" fill="#fff" stroke="#000" stroke-width="1"/><circle cx="1448.5" cy="278.8" r="3.6" fill="#fff" stroke="#000" stroke-width="1"/><circle cx="1476.5" cy="286.5" r="3.6" fill="#fff" stroke="#000" stroke-width="1"/><circle cx="1504.5" cy="311.7" r="3.6" fill="#fff" stroke="#000" stroke-width="1"/><circle cx="1532.5" cy="272.8" r="3.6" fill="#fff" stroke="#000" stroke-width="1"/><circle cx="1560.5" cy="340.2" r="3.6" fill="#fff" stroke="#000" stroke-width="1"/><text transform="translate(1084.3 326.4) rotate(-38.5)" font-size="11.8" font-weight="bold" fill="#222" stroke="#fff" stroke-width="2" paint-order="stroke" stroke-linejoin="round">34.942</text><text transform="translate(1112.3 266.8) rotate(-38.5)" font-size="11.8" font-weight="bold" fill="#222" stroke="#fff" stroke-width="2" paint-order="stroke" stroke-linejoin="round">43.702</text><text transform="translate(1140.3 274.5) rotate(-38.5)" font-size="11.8" font-weight="bold" fill="#222" stroke="#fff" stroke-width="2" paint-order="stroke" stroke-linejoin="round">42.578</text><text transform="translate(1168.3 299.7) rotate(-38.5)" font-size="11.8" font-weight="bold" fill="#222" stroke="#fff" stroke-width="2" paint-order="stroke" stroke-linejoin="round">38.872</text><text transform="translate(1196.3 260.8) rotate(-38.5)" font-size="11.8" font-weight="bold" fill="#222" stroke="#fff" stroke-width="2" paint-order="stroke" stroke-linejoin="round">44.593</text><text transform="translate(1224.3 328.2) rotate(-38.5)" font-size="11.8" font-weight="bold" fill="#222" stroke="#fff" stroke-width="2" paint-order="stroke" stroke-linejoin="round">34.673</text><text transform="translate(1252.3 306.6) rotate(-38.5)" font-size="11.8" font-weight="bold" fill="#222" stroke="#fff" stroke-width="2" paint-order="stroke" stroke-linejoin="round">37.852</text><text transform="translate(1280.3 225.7) rotate(-38.5)" font-size="11.8" font-weight="bold" fill="#222" stroke="#fff" stroke-width="2" paint-order="stroke" stroke-linejoin="round">49.755</text><text transform="translate(1308.3 193.4) rotate(-38.5)" font-size="11.8" font-weight="bold" fill="#222" stroke="#fff" stroke-width="2" paint-order="stroke" stroke-linejoin="round">54.497</text><text transform="translate(1336.3 194.2) rotate(-38.5)" font-size="11.8" font-weight="bold" fill="#222" stroke="#fff" stroke-width="2" paint-order="stroke" stroke-linejoin="round">54.389</text><text transform="translate(1364.3 275.9) rotate(-38.5)" font-size="11.8" font-weight="bold" fill="#222" stroke="#fff" stroke-width="2" paint-order="stroke" stroke-linejoin="round">42.375</text><text transform="translate(1392.3 344.8) rotate(-38.5)" font-size="11.8" font-weight="bold" fill="#222" stroke="#fff" stroke-width="2" paint-order="stroke" stroke-linejoin="round">32.238</text><text transform="translate(1420.3 326.4) rotate(-38.5)" font-size="11.8" font-weight="bold" fill="#222" stroke="#fff" stroke-width="2" paint-order="stroke" stroke-linejoin="round">34.942</text><text transform="translate(1448.3 266.8) rotate(-38.5)" font-size="11.8" font-weight="bold" fill="#222" stroke="#fff" stroke-width="2" paint-order="stroke" stroke-linejoin="round">43.702</text><text transform="translate(1476.3 274.5) rotate(-38.5)" font-size="11.8" font-weight="bold" fill="#222" stroke="#fff" stroke-width="2" paint-order="stroke" stroke-linejoin="round">42.578</text><text transform="translate(1504.3 299.7) rotate(-38.5)" font-size="11.8" font-weight="bold" fill="#222" stroke="#fff" stroke-width="2" paint-order="stroke" stroke-linejoin="round">38.872</text><text transform="translate(1532.3 260.8) rotate(-38.5)" font-size="11.8" font-weight="bold" fill="#222" stroke="#fff" stroke-width="2" paint-order="stroke" stroke-linejoin="round">44.593</text><text transform="translate(1560.3 328.2) rotate(-38.5)" font-size="11.8" font-weight="bold" fill="#222" stroke="#fff" stroke-width="2" paint-order="stroke" stroke-linejoin="round">34.673</text><text transform="translate(1077.9 421.5) rotate(65)" font-size="11.5" fill="#333">ENE. / 24</text><text transform="translate(1105.9 421.5) rotate(65)" font-size="11.5" fill="#333">FEB.</text><text transform="translate(1133.9 421.5) rotate(65)" font-size="11.5" fill="#333">MAR.</text><text transform="translate(1161.9 421.5) rotate(65)" font-size="11.5" fill="#333">ABR.</text><text transform="translate(1189.9 421.5) rotate(65)" font-size="11.5" fill="#333">MAY.</text><text transform="translate(1217.9 421.5) rotate(65)" font-size="11.5" fill="#333">JUN.</text><text transform="translate(1245.9 421.5) rotate(65)" font-size="11.5" fill="#333">JUL.</text><text transform="translate(1273.9 421.5) rotate(65)" font-size="11.5" fill="#333">AGO.</text><text transform="translate(1301.9 421.5) rotate(65)" font-size="11.5" fill="#333">SEP.</text><text transform="translate(1329.9 421.5) rotate(65)" font-size="11.5" fill="#333">OCT.</text><text transform="translate(1357.9 421.5) rotate(65)" font-size="11.5" fill="#333">NOV.</text><text transform="translate(1385.9 421.5) rotate(65)" font-size="11.5" fill="#333">DIC. / 24</text><text transform="translate(1413.9 421.5) rotate(65)" font-size="11.5" fill="#333">ENE. / 25</text><text transform="translate(1441.9 421.5) rotate(65)" font-size="11.5" fill="#333">FEB.</text><text transform="translate(1469.9 421.5) rotate(65)" font-size="11.5" fill="#333">MAR.</text><text transform="translate(1497.9 421.5) rotate(65)" font-size="11.5" fill="#333">ABR.</text><text transform="translate(1525.9 421.5) rotate(65)" font-size="11.5" fill="#333">MAY.</text><text transform="translate(1553.9 421.5) rotate(65)" font-size="11.5" fill="#333">JUN.</text><text transform="translate(1581.9 421.5) rotate(65)" font-size="11.5" fill="#333">JUL.</text><text transform="translate(1609.9 421.5) rotate(65)" font-size="11.5" fill="#333">AGO.</text><text transform="translate(1637.9 421.5) rotate(65)" font-size="11.5" fill="#333">SEP.</text><text transform="translate(1665.9 421.5) rotate(65)" font-size="11.5" fill="#333">OCT.</text><text transform="translate(1693.9 421.5) rotate(65)" font-size="11.5" fill="#333">NOV.</text><text transform="translate(1721.9 421.5) rotate(65)" font-size="11.5" fill="#333">DIC. / 25</text><path d="M1777 257.5 H1793" stroke="#2412e0" stroke-width="1.2"/><text x="1797" y="260.0001" font-size="9" fill="#3b22e6">Meta</text><rect x="1777" y="264.0001" width="12" height="11.5" fill="#22fc12"/><text x="1797" y="272.5001" font-size="9" fill="#111">Rango Proceso</text><rect x="1777" y="278.0001" width="12" height="11.5" fill="#ff1a1a"/><text x="1797" y="286.5001" font-size="9" fill="#111">Rango Rojo</text><rect x="1777" y="292.0001" width="12" height="11.5" fill="#e9e9e9"/><text x="1797" y="300.5001" font-size="9" fill="#111">Previsión</text><path d="M1777 312.0001 H1793" stroke="#000" stroke-width="1.5"/><circle cx="1785" cy="312.0001" r="2.8" fill="#000"/><text x="1797" y="315.0001" font-size="9" fill="#111">Realizado</text><defs><linearGradient id="ag960153" x1="0" y1="0" x2="0" y2="1"><stop offset="0" stop-color="#1656c8"/><stop offset="1" stop-color="#3592ec"/></linearGradient></defs><g transform=""><path d="M974.5 301 L967.5 308 L974.5 315" stroke="url(#ag960153)" stroke-width="2.8" fill="none"/><path d="M971.5 321 L965.5 328 L971.5 335 M977.5 321 L971.5 328 L977.5 335" stroke="url(#ag960153)" stroke-width="2.8" fill="none"/></g><g transform="translate(1876 0) scale(-1 1) translate(-1863 0)"><path d="M1873 301 L1866 308 L1873 315" stroke="url(#ag960153)" stroke-width="2.8" fill="none"/><path d="M1870 321 L1864 328 L1870 335 M1876 321 L1870 328 L1876 335" stroke="url(#ag960153)" stroke-width="2.8" fill="none"/></g></svg>
<div class="a" style="left:960px;top:482px;width:919px;height:26px;background:#e0e3e7"></div>
<div class="t" style="left:969.3px;top:490px;font-size:10.75px;color:#3a3a3a">Mediciones Comparativas</div>
<div class="t" style="left:1117.0px;top:490px;font-size:10.75px;color:#3a3a3a">Ocultar Leyenda</div>
<div class="t" style="left:1219.4px;top:490px;font-size:10.75px;color:#3a3a3a">Acumular Valores</div>
<div class="t" style="left:1327.0px;top:490px;font-size:10.75px;color:#3a3a3a">Visualizar<span style="display:inline-block;width:0;height:0;border-left:3px solid transparent;border-right:3px solid transparent;border-top:3.5px solid #222;margin-left:4px;vertical-align:2px"></span></div>
<div class="t" style="left:1404.0px;top:490px;font-size:10.75px;color:#3a3a3a">Periodo: Año actual y año anterior<span style="display:inline-block;width:0;height:0;border-left:3px solid transparent;border-right:3px solid transparent;border-top:3.5px solid #222;margin-left:4px;vertical-align:2px"></span></div>
<div class="t" style="left:1601.0px;top:490px;font-size:10.75px;color:#3a3a3a">Años Anteriores<span style="display:inline-block;width:0;height:0;border-left:3px solid transparent;border-right:3px solid transparent;border-top:3.5px solid #222;margin-left:4px;vertical-align:2px"></span></div>
<div class="a" style="left:1104.9px;top:488px;width:1px;height:14px;background:#c3c8ce;box-shadow:1px 0 0 #fafbfb"></div>
<div class="a" style="left:1207.0px;top:488px;width:1px;height:14px;background:#c3c8ce;box-shadow:1px 0 0 #fafbfb"></div>
<div class="a" style="left:1315.0px;top:488px;width:1px;height:14px;background:#c3c8ce;box-shadow:1px 0 0 #fafbfb"></div>
<div class="a" style="left:1392.0px;top:488px;width:1px;height:14px;background:#c3c8ce;box-shadow:1px 0 0 #fafbfb"></div>
<div class="a" style="left:1589.0px;top:488px;width:1px;height:14px;background:#c3c8ce;box-shadow:1px 0 0 #fafbfb"></div>
<div class="a" style="left:35px;top:512px;width:919px;height:38px;background:#e0e3e7"></div>
<div class="t" style="left:41px;top:518px;font-size:10.7px;color:#444">Costo total de producción</div>
<div class="t" style="left:41px;top:534px;font-size:10.9px;color:#444">$</div>
<svg class="a" style="left:825px;top:520px" width="22" height="22" viewBox="0 0 22 22">
<defs><linearGradient id="ar35512" x1="0" y1="0" x2="0.3" y2="1"><stop offset="0" stop-color="#1a1a1a"/><stop offset="0.45" stop-color="#3a3a3a"/><stop offset="1" stop-color="#b8b8b8"/></linearGradient></defs>
<path d="M6.5 1 h9 v9 h5 L11 20.6 L1 10 H6.5z" fill="url(#ar35512)" stroke="#3a3a3a" stroke-width="0.8" stroke-linejoin="round"/></svg>
<div class="a" style="left:851px;top:515px;width:100px;height:32px;background:#33cc33;border:1.5px solid #111"></div>
<div class="a" style="left:851px;top:529.6px;width:100px;height:1.3px;background:#111"></div>
<div class="t" style="left:851px;top:519px;width:98px;text-align:center;font-size:11px;color:#111">1.248.000</div>
<div class="t" style="left:851px;top:534px;width:98px;text-align:center;font-size:11px;color:#111">1.242.253</div>
<div class="a" style="left:35px;top:550px;width:919px;height:329px;background:#fff"></div>
<div class="a" style="left:55px;top:550px;width:879px;height:329px;background:#f7f8f8"></div>
<svg class="a" style="left:0;top:0" width="1916" height="940" viewBox="0 0 1916 940"><path d="M110.5 803.5 H117.5" stroke="#333333" stroke-width="1"/><text x="106.0" y="806.8" font-size="12" fill="#333" text-anchor="end">75.000</text><path d="M117.5 781.5 H851.5" stroke="#d6d6d6" stroke-width="1"/><path d="M110.5 781.5 H117.5" stroke="#333333" stroke-width="1"/><text x="106.0" y="784.8" font-size="12" fill="#333" text-anchor="end">80.000</text><path d="M117.5 759.5 H851.5" stroke="#d6d6d6" stroke-width="1"/><path d="M110.5 759.5 H117.5" stroke="#333333" stroke-width="1"/><text x="106.0" y="762.8" font-size="12" fill="#333" text-anchor="end">85.000</text><path d="M117.5 738.5 H851.5" stroke="#d6d6d6" stroke-width="1"/><path d="M110.5 738.5 H117.5" stroke="#333333" stroke-width="1"/><text x="106.0" y="741.8" font-size="12" fill="#333" text-anchor="end">90.000</text><path d="M117.5 716.5 H851.5" stroke="#d6d6d6" stroke-width="1"/><path d="M110.5 716.5 H117.5" stroke="#333333" stroke-width="1"/><text x="106.0" y="719.8" font-size="12" fill="#333" text-anchor="end">95.000</text><path d="M117.5 694.5 H851.5" stroke="#d6d6d6" stroke-width="1"/><path d="M110.5 694.5 H117.5" stroke="#333333" stroke-width="1"/><text x="106.0" y="697.8" font-size="12" fill="#333" text-anchor="end">100.000</text><path d="M117.5 673.5 H851.5" stroke="#d6d6d6" stroke-width="1"/><path d="M110.5 673.5 H117.5" stroke="#333333" stroke-width="1"/><text x="106.0" y="676.8" font-size="12" fill="#333" text-anchor="end">105.000</text><path d="M117.5 651.5 H851.5" stroke="#d6d6d6" stroke-width="1"/><path d="M110.5 651.5 H117.5" stroke="#333333" stroke-width="1"/><text x="106.0" y="654.8" font-size="12" fill="#333" text-anchor="end">110.000</text><path d="M117.5 629.5 H851.5" stroke="#d6d6d6" stroke-width="1"/><path d="M110.5 629.5 H117.5" stroke="#333333" stroke-width="1"/><text x="106.0" y="632.8" font-size="12" fill="#333" text-anchor="end">115.000</text><path d="M117.5 608.5 H851.5" stroke="#d6d6d6" stroke-width="1"/><path d="M110.5 608.5 H117.5" stroke="#333333" stroke-width="1"/><text x="106.0" y="611.8" font-size="12" fill="#333" text-anchor="end">120.000</text><path d="M117.5 586.5 H851.5" stroke="#d6d6d6" stroke-width="1"/><path d="M110.5 586.5 H117.5" stroke="#333333" stroke-width="1"/><text x="106.0" y="589.8" font-size="12" fill="#333" text-anchor="end">125.000</text><path d="M110.5 565.5 H117.5" stroke="#333333" stroke-width="1"/><text x="106.0" y="568.8" font-size="12" fill="#333" text-anchor="end">130.000</text><path d="M146.5 566 V803.5" stroke="#d6d6d6" stroke-width="1"/><path d="M146.5 803.5 V810.5" stroke="#333333" stroke-width="1"/><path d="M198.5 566 V803.5" stroke="#d6d6d6" stroke-width="1"/><path d="M198.5 803.5 V810.5" stroke="#333333" stroke-width="1"/><path d="M250.5 566 V803.5" stroke="#d6d6d6" stroke-width="1"/><path d="M250.5 803.5 V810.5" stroke="#333333" stroke-width="1"/><path d="M302.5 566 V803.5" stroke="#d6d6d6" stroke-width="1"/><path d="M302.5 803.5 V810.5" stroke="#333333" stroke-width="1"/><path d="M354.5 566 V803.5" stroke="#d6d6d6" stroke-width="1"/><path d="M354.5 803.5 V810.5" stroke="#333333" stroke-width="1"/><path d="M406.5 566 V803.5" stroke="#d6d6d6" stroke-width="1"/><path d="M406.5 803.5 V810.5" stroke="#333333" stroke-width="1"/><path d="M458.5 566 V803.5" stroke="#d6d6d6" stroke-width="1"/><path d="M458.5 803.5 V810.5" stroke="#333333" stroke-width="1"/><path d="M510.5 566 V803.5" stroke="#d6d6d6" stroke-width="1"/><path d="M510.5 803.5 V810.5" stroke="#333333" stroke-width="1"/><path d="M562.5 566 V803.5" stroke="#d6d6d6" stroke-width="1"/><path d="M562.5 803.5 V810.5" stroke="#333333" stroke-width="1"/><path d="M614.5 566 V803.5" stroke="#d6d6d6" stroke-width="1"/><path d="M614.5 803.5 V810.5" stroke="#333333" stroke-width="1"/><path d="M666.5 566 V803.5" stroke="#d6d6d6" stroke-width="1"/><path d="M666.5 803.5 V810.5" stroke="#333333" stroke-width="1"/><path d="M718.5 566 V803.5" stroke="#d6d6d6" stroke-width="1"/><path d="M718.5 803.5 V810.5" stroke="#333333" stroke-width="1"/><path d="M770.5 566 V803.5" stroke="#d6d6d6" stroke-width="1"/><path d="M770.5 803.5 V810.5" stroke="#333333" stroke-width="1"/><path d="M823.5 566 V803.5" stroke="#d6d6d6" stroke-width="1"/><path d="M823.5 803.5 V810.5" stroke="#333333" stroke-width="1"/><path d="M117.5 565 V803.5" stroke="#333333" stroke-width="1"/><path d="M117.0 803.5 H851.5" stroke="#333333" stroke-width="1"/><rect x="197.4" y="776.8" width="64.4" height="17.100000000000023" fill="#bdbdbd"/><rect x="154" y="659" width="9" height="42.5" fill="#a9a9a9"/><rect x="154" y="680.0" width="9" height="5" fill="#222"/><rect x="191" y="589.0" width="17" height="181.0" fill="none" stroke="#000" stroke-opacity="0.05" stroke-width="2"/><rect x="190" y="588.0" width="17" height="181.0" fill="#22fc12"/><rect x="244" y="589.0" width="17" height="181.0" fill="none" stroke="#000" stroke-opacity="0.05" stroke-width="2"/><rect x="243" y="588.0" width="17" height="181.0" fill="#22fc12"/><rect x="296" y="589.0" width="17" height="181.0" fill="none" stroke="#000" stroke-opacity="0.05" stroke-width="2"/><rect x="295" y="588.0" width="17" height="181.0" fill="#22fc12"/><rect x="348" y="589.0" width="17" height="181.0" fill="none" stroke="#000" stroke-opacity="0.05" stroke-width="2"/><rect x="347" y="588.0" width="17" height="181.0" fill="#22fc12"/><rect x="400" y="589.0" width="17" height="181.0" fill="none" stroke="#000" stroke-opacity="0.05" stroke-width="2"/><rect x="399" y="588.0" width="17" height="181.0" fill="#22fc12"/><rect x="452" y="589.0" width="17" height="181.0" fill="none" stroke="#000" stroke-opacity="0.05" stroke-width="2"/><rect x="451" y="588.0" width="17" height="181.0" fill="#22fc12"/><rect x="504" y="589.0" width="17" height="181.0" fill="none" stroke="#000" stroke-opacity="0.05" stroke-width="2"/><rect x="503" y="588.0" width="17" height="181.0" fill="#22fc12"/><rect x="556" y="589.0" width="17" height="181.0" fill="none" stroke="#000" stroke-opacity="0.05" stroke-width="2"/><rect x="555" y="588.0" width="17" height="181.0" fill="#22fc12"/><rect x="608" y="589.0" width="17" height="181.0" fill="none" stroke="#000" stroke-opacity="0.05" stroke-width="2"/><rect x="607" y="588.0" width="17" height="181.0" fill="#22fc12"/><rect x="660" y="589.0" width="17" height="181.0" fill="none" stroke="#000" stroke-opacity="0.05" stroke-width="2"/><rect x="659" y="588.0" width="17" height="181.0" fill="#22fc12"/><rect x="712" y="589.0" width="17" height="181.0" fill="none" stroke="#000" stroke-opacity="0.05" stroke-width="2"/><rect x="711" y="588.0" width="17" height="181.0" fill="#22fc12"/><rect x="765" y="589.0" width="17" height="181.0" fill="none" stroke="#000" stroke-opacity="0.05" stroke-width="2"/><rect x="764" y="588.0" width="17" height="181.0" fill="#22fc12"/><rect x="190" y="674.7" width="17" height="6" fill="#e4e4e4"/><rect x="243" y="674.7" width="17" height="6" fill="#e4e4e4"/><rect x="295" y="674.7" width="17" height="6" fill="#e4e4e4"/><rect x="347" y="674.7" width="17" height="6" fill="#e4e4e4"/><rect x="399" y="674.7" width="17" height="6" fill="#e4e4e4"/><rect x="451" y="674.7" width="17" height="6" fill="#e4e4e4"/><rect x="503" y="674.7" width="17" height="6" fill="#e4e4e4"/><rect x="555" y="674.7" width="17" height="6" fill="#e4e4e4"/><rect x="607" y="674.7" width="17" height="6" fill="#e4e4e4"/><rect x="659" y="674.7" width="17" height="6" fill="#e4e4e4"/><rect x="711" y="674.7" width="17" height="6" fill="#e4e4e4"/><rect x="764" y="674.7" width="17" height="6" fill="#e4e4e4"/><path d="M198.5 677.5 H770.5" stroke="#2412e0" stroke-width="4.2" stroke-linecap="round"/><path d="M198.5 659.5 L250.5 674.7 L302.5 689.5 L354.5 671.9 L406.5 700.7 L458.5 693.7" stroke="#000" stroke-width="3" fill="none" stroke-linejoin="round"/><circle cx="198.5" cy="659.5" r="3.6" fill="#fff" stroke="#000" stroke-width="1"/><circle cx="250.5" cy="674.7" r="3.6" fill="#fff" stroke="#000" stroke-width="1"/><circle cx="302.5" cy="689.5" r="3.6" fill="#fff" stroke="#000" stroke-width="1"/><circle cx="354.5" cy="671.9" r="3.6" fill="#fff" stroke="#000" stroke-width="1"/><circle cx="406.5" cy="700.7" r="3.6" fill="#fff" stroke="#000" stroke-width="1"/><circle cx="458.5" cy="693.7" r="3.6" fill="#fff" stroke="#000" stroke-width="1"/><text transform="translate(198.3 647.5) rotate(-38.5)" font-size="11.8" font-weight="bold" fill="#222" stroke="#fff" stroke-width="2" paint-order="stroke" stroke-linejoin="round">108.158</text><text transform="translate(250.3 662.7) rotate(-38.5)" font-size="11.8" font-weight="bold" fill="#222" stroke="#fff" stroke-width="2" paint-order="stroke" stroke-linejoin="round">104.642</text><text transform="translate(302.3 677.5) rotate(-38.5)" font-size="11.8" font-weight="bold" fill="#222" stroke="#fff" stroke-width="2" paint-order="stroke" stroke-linejoin="round">101.239</text><text transform="translate(354.3 659.9) rotate(-38.5)" font-size="11.8" font-weight="bold" fill="#222" stroke="#fff" stroke-width="2" paint-order="stroke" stroke-linejoin="round">105.303</text><text transform="translate(406.3 688.7) rotate(-38.5)" font-size="11.8" font-weight="bold" fill="#222" stroke="#fff" stroke-width="2" paint-order="stroke" stroke-linejoin="round">98.652</text><text transform="translate(458.3 681.7) rotate(-38.5)" font-size="11.8" font-weight="bold" fill="#222" stroke="#fff" stroke-width="2" paint-order="stroke" stroke-linejoin="round">100.260</text><text transform="translate(191.9 818.5) rotate(65)" font-size="11.5" fill="#333">ENE. / 25</text><text transform="translate(243.9 818.5) rotate(65)" font-size="11.5" fill="#333">FEB.</text><text transform="translate(295.9 818.5) rotate(65)" font-size="11.5" fill="#333">MAR.</text><text transform="translate(347.9 818.5) rotate(65)" font-size="11.5" fill="#333">ABR.</text><text transform="translate(399.9 818.5) rotate(65)" font-size="11.5" fill="#333">MAY.</text><text transform="translate(451.9 818.5) rotate(65)" font-size="11.5" fill="#333">JUN.</text><text transform="translate(503.9 818.5) rotate(65)" font-size="11.5" fill="#333">JUL.</text><text transform="translate(555.9 818.5) rotate(65)" font-size="11.5" fill="#333">AGO.</text><text transform="translate(607.9 818.5) rotate(65)" font-size="11.5" fill="#333">SEP.</text><text transform="translate(659.9 818.5) rotate(65)" font-size="11.5" fill="#333">OCT.</text><text transform="translate(711.9 818.5) rotate(65)" font-size="11.5" fill="#333">NOV.</text><text transform="translate(763.9 818.5) rotate(65)" font-size="11.5" fill="#333">DIC. / 25</text><path d="M852 654.5 H868" stroke="#2412e0" stroke-width="1.2"/><text x="872" y="657.0001" font-size="9" fill="#3b22e6">Meta</text><rect x="852" y="661.0001" width="12" height="11.5" fill="#22fc12"/><text x="872" y="669.5001" font-size="9" fill="#111">Rango Proceso</text><rect x="852" y="675.0001" width="12" height="11.5" fill="#ff1a1a"/><text x="872" y="683.5001" font-size="9" fill="#111">Rango Rojo</text><rect x="852" y="689.0001" width="12" height="11.5" fill="#e9e9e9"/><text x="872" y="697.5001" font-size="9" fill="#111">Previsión</text><path d="M852 709.0001 H868" stroke="#000" stroke-width="1.5"/><circle cx="860" cy="709.0001" r="2.8" fill="#000"/><text x="872" y="712.0001" font-size="9" fill="#111">Realizado</text><defs><linearGradient id="ag35550" x1="0" y1="0" x2="0" y2="1"><stop offset="0" stop-color="#1656c8"/><stop offset="1" stop-color="#3592ec"/></linearGradient></defs><g transform=""><path d="M49.5 698 L42.5 705 L49.5 712" stroke="url(#ag35550)" stroke-width="2.8" fill="none"/><path d="M46.5 718 L40.5 725 L46.5 732 M52.5 718 L46.5 725 L52.5 732" stroke="url(#ag35550)" stroke-width="2.8" fill="none"/></g><g transform="translate(951 0) scale(-1 1) translate(-938 0)"><path d="M948 698 L941 705 L948 712" stroke="url(#ag35550)" stroke-width="2.8" fill="none"/><path d="M945 718 L939 725 L945 732 M951 718 L945 725 L951 732" stroke="url(#ag35550)" stroke-width="2.8" fill="none"/></g></svg>
<div class="a" style="left:35px;top:879px;width:919px;height:26px;background:#e0e3e7"></div>
<div class="t" style="left:44.3px;top:887px;font-size:10.75px;color:#3a3a3a">Mediciones Comparativas</div>
<div class="t" style="left:192.0px;top:887px;font-size:10.75px;color:#3a3a3a">Ocultar Leyenda</div>
<div class="t" style="left:294.4px;top:887px;font-size:10.75px;color:#3a3a3a">Acumular Valores</div>
<div class="t" style="left:402.0px;top:887px;font-size:10.75px;color:#3a3a3a">Visualizar<span style="display:inline-block;width:0;height:0;border-left:3px solid transparent;border-right:3px solid transparent;border-top:3.5px solid #222;margin-left:4px;vertical-align:2px"></span></div>
<div class="t" style="left:479.0px;top:887px;font-size:10.75px;color:#3a3a3a">Periodo: Año actual<span style="display:inline-block;width:0;height:0;border-left:3px solid transparent;border-right:3px solid transparent;border-top:3.5px solid #222;margin-left:4px;vertical-align:2px"></span></div>
<div class="t" style="left:605.0px;top:887px;font-size:10.75px;color:#3a3a3a">Años Anteriores<span style="display:inline-block;width:0;height:0;border-left:3px solid transparent;border-right:3px solid transparent;border-top:3.5px solid #222;margin-left:4px;vertical-align:2px"></span></div>
<div class="a" style="left:179.9px;top:885px;width:1px;height:14px;background:#c3c8ce;box-shadow:1px 0 0 #fafbfb"></div>
<div class="a" style="left:282.0px;top:885px;width:1px;height:14px;background:#c3c8ce;box-shadow:1px 0 0 #fafbfb"></div>
<div class="a" style="left:390.0px;top:885px;width:1px;height:14px;background:#c3c8ce;box-shadow:1px 0 0 #fafbfb"></div>
<div class="a" style="left:467.0px;top:885px;width:1px;height:14px;background:#c3c8ce;box-shadow:1px 0 0 #fafbfb"></div>
<div class="a" style="left:592.8px;top:885px;width:1px;height:14px;background:#c3c8ce;box-shadow:1px 0 0 #fafbfb"></div>
<div class="a" style="left:960px;top:512px;width:919px;height:38px;background:#e0e3e7"></div>
<div class="t" style="left:966px;top:518px;font-size:10.7px;color:#444">Costo total de Aprovisionamiento y Logística</div>
<div class="t" style="left:966px;top:534px;font-size:10.9px;color:#444">$</div>
<svg class="a" style="left:1750px;top:520px" width="22" height="22" viewBox="0 0 22 22">
<defs><linearGradient id="ar960512" x1="0" y1="0" x2="0.3" y2="1"><stop offset="0" stop-color="#1a1a1a"/><stop offset="0.45" stop-color="#3a3a3a"/><stop offset="1" stop-color="#b8b8b8"/></linearGradient></defs>
<path d="M6.5 1 h9 v9 h5 L11 20.6 L1 10 H6.5z" fill="url(#ar960512)" stroke="#3a3a3a" stroke-width="0.8" stroke-linejoin="round"/></svg>
<div class="a" style="left:1776px;top:515px;width:100px;height:32px;background:#33cc33;border:1.5px solid #111"></div>
<div class="a" style="left:1776px;top:529.6px;width:100px;height:1.3px;background:#111"></div>
<div class="t" style="left:1776px;top:519px;width:98px;text-align:center;font-size:11px;color:#111">600.000</div>
<div class="t" style="left:1776px;top:534px;width:98px;text-align:center;font-size:11px;color:#111">592.066</div>
<div class="a" style="left:960px;top:550px;width:919px;height:329px;background:#fff"></div>
<div class="a" style="left:980px;top:550px;width:879px;height:329px;background:#f7f8f8"></div>
<svg class="a" style="left:0;top:0" width="1916" height="940" viewBox="0 0 1916 940"><path d="M1028.5 803.5 H1035.5" stroke="#333333" stroke-width="1"/><text x="1024.0" y="806.8" font-size="12" fill="#333" text-anchor="end">37.500</text><path d="M1035.5 779.5 H1776.5" stroke="#d6d6d6" stroke-width="1"/><path d="M1028.5 779.5 H1035.5" stroke="#333333" stroke-width="1"/><text x="1024.0" y="782.8" font-size="12" fill="#333" text-anchor="end">40.000</text><path d="M1035.5 755.5 H1776.5" stroke="#d6d6d6" stroke-width="1"/><path d="M1028.5 755.5 H1035.5" stroke="#333333" stroke-width="1"/><text x="1024.0" y="758.8" font-size="12" fill="#333" text-anchor="end">42.500</text><path d="M1035.5 731.5 H1776.5" stroke="#d6d6d6" stroke-width="1"/><path d="M1028.5 731.5 H1035.5" stroke="#333333" stroke-width="1"/><text x="1024.0" y="734.8" font-size="12" fill="#333" text-anchor="end">45.000</text><path d="M1035.5 707.5 H1776.5" stroke="#d6d6d6" stroke-width="1"/><path d="M1028.5 707.5 H1035.5" stroke="#333333" stroke-width="1"/><text x="1024.0" y="710.8" font-size="12" fill="#333" text-anchor="end">47.500</text><path d="M1035.5 684.5 H1776.5" stroke="#d6d6d6" stroke-width="1"/><path d="M1028.5 684.5 H1035.5" stroke="#333333" stroke-width="1"/><text x="1024.0" y="687.8" font-size="12" fill="#333" text-anchor="end">50.000</text><path d="M1035.5 660.5 H1776.5" stroke="#d6d6d6" stroke-width="1"/><path d="M1028.5 660.5 H1035.5" stroke="#333333" stroke-width="1"/><text x="1024.0" y="663.8" font-size="12" fill="#333" text-anchor="end">52.500</text><path d="M1035.5 636.5 H1776.5" stroke="#d6d6d6" stroke-width="1"/><path d="M1028.5 636.5 H1035.5" stroke="#333333" stroke-width="1"/><text x="1024.0" y="639.8" font-size="12" fill="#333" text-anchor="end">55.000</text><path d="M1035.5 612.5 H1776.5" stroke="#d6d6d6" stroke-width="1"/><path d="M1028.5 612.5 H1035.5" stroke="#333333" stroke-width="1"/><text x="1024.0" y="615.8" font-size="12" fill="#333" text-anchor="end">57.500</text><path d="M1035.5 588.5 H1776.5" stroke="#d6d6d6" stroke-width="1"/><path d="M1028.5 588.5 H1035.5" stroke="#333333" stroke-width="1"/><text x="1024.0" y="591.8" font-size="12" fill="#333" text-anchor="end">60.000</text><path d="M1028.5 565.5 H1035.5" stroke="#333333" stroke-width="1"/><text x="1024.0" y="568.8" font-size="12" fill="#333" text-anchor="end">62.500</text><path d="M1065.5 566 V803.5" stroke="#d6d6d6" stroke-width="1"/><path d="M1065.5 803.5 V810.5" stroke="#333333" stroke-width="1"/><path d="M1117.5 566 V803.5" stroke="#d6d6d6" stroke-width="1"/><path d="M1117.5 803.5 V810.5" stroke="#333333" stroke-width="1"/><path d="M1170.5 566 V803.5" stroke="#d6d6d6" stroke-width="1"/><path d="M1170.5 803.5 V810.5" stroke="#333333" stroke-width="1"/><path d="M1222.5 566 V803.5" stroke="#d6d6d6" stroke-width="1"/><path d="M1222.5 803.5 V810.5" stroke="#333333" stroke-width="1"/><path d="M1275.5 566 V803.5" stroke="#d6d6d6" stroke-width="1"/><path d="M1275.5 803.5 V810.5" stroke="#333333" stroke-width="1"/><path d="M1327.5 566 V803.5" stroke="#d6d6d6" stroke-width="1"/><path d="M1327.5 803.5 V810.5" stroke="#333333" stroke-width="1"/><path d="M1379.5 566 V803.5" stroke="#d6d6d6" stroke-width="1"/><path d="M1379.5 803.5 V810.5" stroke="#333333" stroke-width="1"/><path d="M1432.5 566 V803.5" stroke="#d6d6d6" stroke-width="1"/><path d="M1432.5 803.5 V810.5" stroke="#333333" stroke-width="1"/><path d="M1484.5 566 V803.5" stroke="#d6d6d6" stroke-width="1"/><path d="M1484.5 803.5 V810.5" stroke="#333333" stroke-width="1"/><path d="M1537.5 566 V803.5" stroke="#d6d6d6" stroke-width="1"/><path d="M1537.5 803.5 V810.5" stroke="#333333" stroke-width="1"/><path d="M1589.5 566 V803.5" stroke="#d6d6d6" stroke-width="1"/><path d="M1589.5 803.5 V810.5" stroke="#333333" stroke-width="1"/><path d="M1642.5 566 V803.5" stroke="#d6d6d6" stroke-width="1"/><path d="M1642.5 803.5 V810.5" stroke="#333333" stroke-width="1"/><path d="M1694.5 566 V803.5" stroke="#d6d6d6" stroke-width="1"/><path d="M1694.5 803.5 V810.5" stroke="#333333" stroke-width="1"/><path d="M1747.5 566 V803.5" stroke="#d6d6d6" stroke-width="1"/><path d="M1747.5 803.5 V810.5" stroke="#333333" stroke-width="1"/><path d="M1035.5 565 V803.5" stroke="#333333" stroke-width="1"/><path d="M1035.0 803.5 H1776.5" stroke="#333333" stroke-width="1"/><rect x="1073" y="689.5" width="9" height="17.5" fill="#a9a9a9"/><rect x="1073" y="695.5" width="9" height="5" fill="#222"/><rect x="1110" y="590.0" width="17" height="190.5" fill="none" stroke="#000" stroke-opacity="0.05" stroke-width="2"/><rect x="1109" y="589.0" width="17" height="190.5" fill="#22fc12"/><rect x="1163" y="590.0" width="17" height="190.5" fill="none" stroke="#000" stroke-opacity="0.05" stroke-width="2"/><rect x="1162" y="589.0" width="17" height="190.5" fill="#22fc12"/><rect x="1215" y="590.0" width="17" height="190.5" fill="none" stroke="#000" stroke-opacity="0.05" stroke-width="2"/><rect x="1214" y="589.0" width="17" height="190.5" fill="#22fc12"/><rect x="1268" y="590.0" width="17" height="190.5" fill="none" stroke="#000" stroke-opacity="0.05" stroke-width="2"/><rect x="1267" y="589.0" width="17" height="190.5" fill="#22fc12"/><rect x="1321" y="590.0" width="17" height="190.5" fill="none" stroke="#000" stroke-opacity="0.05" stroke-width="2"/><rect x="1320" y="589.0" width="17" height="190.5" fill="#22fc12"/><rect x="1373" y="590.0" width="17" height="190.5" fill="none" stroke="#000" stroke-opacity="0.05" stroke-width="2"/><rect x="1372" y="589.0" width="17" height="190.5" fill="#22fc12"/><rect x="1426" y="590.0" width="17" height="190.5" fill="none" stroke="#000" stroke-opacity="0.05" stroke-width="2"/><rect x="1425" y="589.0" width="17" height="190.5" fill="#22fc12"/><rect x="1478" y="590.0" width="17" height="190.5" fill="none" stroke="#000" stroke-opacity="0.05" stroke-width="2"/><rect x="1477" y="589.0" width="17" height="190.5" fill="#22fc12"/><rect x="1531" y="590.0" width="17" height="190.5" fill="none" stroke="#000" stroke-opacity="0.05" stroke-width="2"/><rect x="1530" y="589.0" width="17" height="190.5" fill="#22fc12"/><rect x="1584" y="590.0" width="17" height="190.5" fill="none" stroke="#000" stroke-opacity="0.05" stroke-width="2"/><rect x="1583" y="589.0" width="17" height="190.5" fill="#22fc12"/><rect x="1636" y="590.0" width="17" height="190.5" fill="none" stroke="#000" stroke-opacity="0.05" stroke-width="2"/><rect x="1635" y="589.0" width="17" height="190.5" fill="#22fc12"/><rect x="1689" y="590.0" width="17" height="190.5" fill="none" stroke="#000" stroke-opacity="0.05" stroke-width="2"/><rect x="1688" y="589.0" width="17" height="190.5" fill="#22fc12"/><rect x="1109" y="681.4" width="17" height="6" fill="#e4e4e4"/><rect x="1162" y="681.4" width="17" height="6" fill="#e4e4e4"/><rect x="1214" y="681.4" width="17" height="6" fill="#e4e4e4"/><rect x="1267" y="681.4" width="17" height="6" fill="#e4e4e4"/><rect x="1320" y="681.4" width="17" height="6" fill="#e4e4e4"/><rect x="1372" y="681.4" width="17" height="6" fill="#e4e4e4"/><rect x="1425" y="681.4" width="17" height="6" fill="#e4e4e4"/><rect x="1477" y="681.4" width="17" height="6" fill="#e4e4e4"/><rect x="1530" y="681.4" width="17" height="6" fill="#e4e4e4"/><rect x="1583" y="681.4" width="17" height="6" fill="#e4e4e4"/><rect x="1635" y="681.4" width="17" height="6" fill="#e4e4e4"/><rect x="1688" y="681.4" width="17" height="6" fill="#e4e4e4"/><path d="M1117.5 684.0 H1694.5" stroke="#2412e0" stroke-width="4.2" stroke-linecap="round"/><path d="M1117.5 696.9 L1170.5 690.4 L1222.5 696.3 L1275.5 700.9 L1327.5 689.1 L1379.5 705.9" stroke="#000" stroke-width="3" fill="none" stroke-linejoin="round"/><circle cx="1117.5" cy="696.9" r="3.6" fill="#fff" stroke="#000" stroke-width="1"/><circle cx="1170.5" cy="690.4" r="3.6" fill="#fff" stroke="#000" stroke-width="1"/><circle cx="1222.5" cy="696.3" r="3.6" fill="#fff" stroke="#000" stroke-width="1"/><circle cx="1275.5" cy="700.9" r="3.6" fill="#fff" stroke="#000" stroke-width="1"/><circle cx="1327.5" cy="689.1" r="3.6" fill="#fff" stroke="#000" stroke-width="1"/><circle cx="1379.5" cy="705.9" r="3.6" fill="#fff" stroke="#000" stroke-width="1"/><text transform="translate(1117.3 684.9) rotate(-38.5)" font-size="11.8" font-weight="bold" fill="#222" stroke="#fff" stroke-width="2" paint-order="stroke" stroke-linejoin="round">48.649</text><text transform="translate(1170.3 678.4) rotate(-38.5)" font-size="11.8" font-weight="bold" fill="#222" stroke="#fff" stroke-width="2" paint-order="stroke" stroke-linejoin="round">49.325</text><text transform="translate(1222.3 684.3) rotate(-38.5)" font-size="11.8" font-weight="bold" fill="#222" stroke="#fff" stroke-width="2" paint-order="stroke" stroke-linejoin="round">48.708</text><text transform="translate(1275.3 688.9) rotate(-38.5)" font-size="11.8" font-weight="bold" fill="#222" stroke="#fff" stroke-width="2" paint-order="stroke" stroke-linejoin="round">48.225</text><text transform="translate(1327.3 677.1) rotate(-38.5)" font-size="11.8" font-weight="bold" fill="#222" stroke="#fff" stroke-width="2" paint-order="stroke" stroke-linejoin="round">49.461</text><text transform="translate(1379.3 693.9) rotate(-38.5)" font-size="11.8" font-weight="bold" fill="#222" stroke="#fff" stroke-width="2" paint-order="stroke" stroke-linejoin="round">47.697</text><text transform="translate(1110.9 818.5) rotate(65)" font-size="11.5" fill="#333">ENE. / 25</text><text transform="translate(1163.9 818.5) rotate(65)" font-size="11.5" fill="#333">FEB.</text><text transform="translate(1215.9 818.5) rotate(65)" font-size="11.5" fill="#333">MAR.</text><text transform="translate(1268.9 818.5) rotate(65)" font-size="11.5" fill="#333">ABR.</text><text transform="translate(1320.9 818.5) rotate(65)" font-size="11.5" fill="#333">MAY.</text><text transform="translate(1372.9 818.5) rotate(65)" font-size="11.5" fill="#333">JUN.</text><text transform="translate(1425.9 818.5) rotate(65)" font-size="11.5" fill="#333">JUL.</text><text transform="translate(1477.9 818.5) rotate(65)" font-size="11.5" fill="#333">AGO.</text><text transform="translate(1530.9 818.5) rotate(65)" font-size="11.5" fill="#333">SEP.</text><text transform="translate(1582.9 818.5) rotate(65)" font-size="11.5" fill="#333">OCT.</text><text transform="translate(1635.9 818.5) rotate(65)" font-size="11.5" fill="#333">NOV.</text><text transform="translate(1687.9 818.5) rotate(65)" font-size="11.5" fill="#333">DIC. / 25</text><path d="M1777 654.5 H1793" stroke="#2412e0" stroke-width="1.2"/><text x="1797" y="657.0001" font-size="9" fill="#3b22e6">Meta</text><rect x="1777" y="661.0001" width="12" height="11.5" fill="#22fc12"/><text x="1797" y="669.5001" font-size="9" fill="#111">Rango Proceso</text><rect x="1777" y="675.0001" width="12" height="11.5" fill="#ff1a1a"/><text x="1797" y="683.5001" font-size="9" fill="#111">Rango Rojo</text><rect x="1777" y="689.0001" width="12" height="11.5" fill="#e9e9e9"/><text x="1797" y="697.5001" font-size="9" fill="#111">Previsión</text><path d="M1777 709.0001 H1793" stroke="#000" stroke-width="1.5"/><circle cx="1785" cy="709.0001" r="2.8" fill="#000"/><text x="1797" y="712.0001" font-size="9" fill="#111">Realizado</text><defs><linearGradient id="ag960550" x1="0" y1="0" x2="0" y2="1"><stop offset="0" stop-color="#1656c8"/><stop offset="1" stop-color="#3592ec"/></linearGradient></defs><g transform=""><path d="M974.5 698 L967.5 705 L974.5 712" stroke="url(#ag960550)" stroke-width="2.8" fill="none"/><path d="M971.5 718 L965.5 725 L971.5 732 M977.5 718 L971.5 725 L977.5 732" stroke="url(#ag960550)" stroke-width="2.8" fill="none"/></g><g transform="translate(1876 0) scale(-1 1) translate(-1863 0)"><path d="M1873 698 L1866 705 L1873 712" stroke="url(#ag960550)" stroke-width="2.8" fill="none"/><path d="M1870 718 L1864 725 L1870 732 M1876 718 L1870 725 L1876 732" stroke="url(#ag960550)" stroke-width="2.8" fill="none"/></g></svg>
<div class="a" style="left:960px;top:879px;width:919px;height:26px;background:#e0e3e7"></div>
<div class="t" style="left:969.3px;top:887px;font-size:10.75px;color:#3a3a3a">Mediciones Comparativas</div>
<div class="t" style="left:1117.0px;top:887px;font-size:10.75px;color:#3a3a3a">Ocultar Leyenda</div>
<div class="t" style="left:1219.4px;top:887px;font-size:10.75px;color:#3a3a3a">Acumular Valores</div>
<div class="t" style="left:1327.0px;top:887px;font-size:10.75px;color:#3a3a3a">Visualizar<span style="display:inline-block;width:0;height:0;border-left:3px solid transparent;border-right:3px solid transparent;border-top:3.5px solid #222;margin-left:4px;vertical-align:2px"></span></div>
<div class="t" style="left:1404.0px;top:887px;font-size:10.75px;color:#3a3a3a">Periodo: Año actual<span style="display:inline-block;width:0;height:0;border-left:3px solid transparent;border-right:3px solid transparent;border-top:3.5px solid #222;margin-left:4px;vertical-align:2px"></span></div>
<div class="t" style="left:1530.0px;top:887px;font-size:10.75px;color:#3a3a3a">Años Anteriores<span style="display:inline-block;width:0;height:0;border-left:3px solid transparent;border-right:3px solid transparent;border-top:3.5px solid #222;margin-left:4px;vertical-align:2px"></span></div>
<div class="a" style="left:1104.9px;top:885px;width:1px;height:14px;background:#c3c8ce;box-shadow:1px 0 0 #fafbfb"></div>
<div class="a" style="left:1207.0px;top:885px;width:1px;height:14px;background:#c3c8ce;box-shadow:1px 0 0 #fafbfb"></div>
<div class="a" style="left:1315.0px;top:885px;width:1px;height:14px;background:#c3c8ce;box-shadow:1px 0 0 #fafbfb"></div>
<div class="a" style="left:1392.0px;top:885px;width:1px;height:14px;background:#c3c8ce;box-shadow:1px 0 0 #fafbfb"></div>
<div class="a" style="left:1517.8px;top:885px;width:1px;height:14px;background:#c3c8ce;box-shadow:1px 0 0 #fafbfb"></div>
<div class="a" style="left:30px;top:875px;width:674px;height:38px;border:4px solid #0a46e4"></div>
</body></html>
